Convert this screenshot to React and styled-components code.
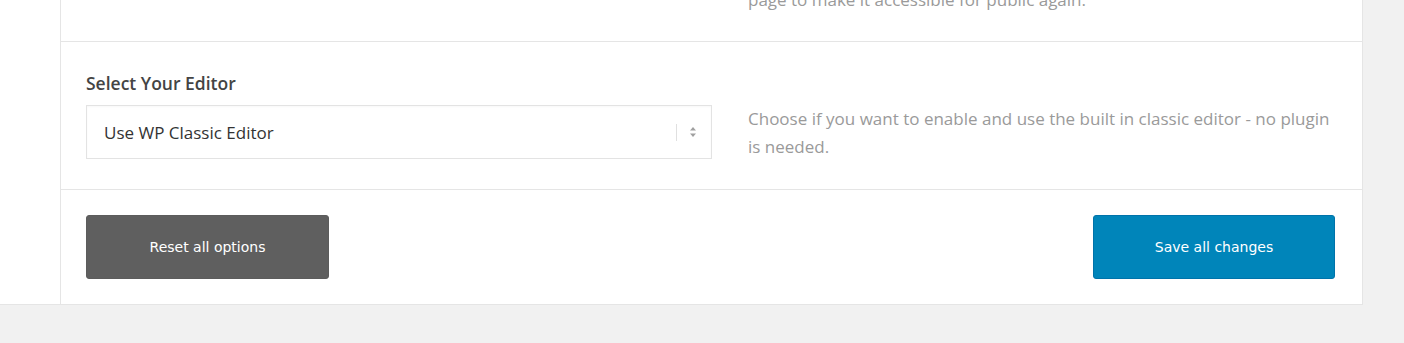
import React from "react";
import styled, { createGlobalStyle } from "styled-components";

const GlobalStyle = createGlobalStyle`
  body {
    margin: 0;
    background: #f1f1f1;
    font-family: "Open Sans", "Noto Sans", sans-serif;
  }
`;

const Panel = styled.div`
  display: flex;
  width: 1362px;
  background: #fff;
  border-right: 1px solid #e5e5e5;
  border-bottom: 1px solid #e5e5e5;
`;

const Side = styled.div`
  width: 60px;
  border-right: 1px solid #e5e5e5;
`;

const Main = styled.div`
  flex: 1;
`;

const Row = styled.div`
  display: grid;
  grid-template-columns: 626px 1fr;
  column-gap: 36px;
  padding: ${(p) => p.$pad || "0 26px 0 25px"};
  border-bottom: 1px solid #e5e5e5;
`;

const TopRow = styled(Row)`
  height: 42px;
  box-sizing: border-box;
  overflow: hidden;
  align-items: start;
`;

const Field = styled.div`
  display: flex;
  flex-direction: column;
`;

const Label = styled.div`
  font-size: 17.5px;
  font-weight: 600;
  line-height: 24px;
  color: #444;
  margin-bottom: 10px;
`;

const Select = styled.div`
  display: flex;
  align-items: center;
  height: 52px;
  border: 1px solid #e3e3e3;
  box-shadow: inset 0 1px 2px rgba(0, 0, 0, 0.03);
  padding: 0 14px 0 17px;
  font-size: 17px;
  color: #333;
`;

const SelectText = styled.span`
  flex: 1;
`;

const Divider = styled.span`
  width: 1px;
  height: 17px;
  background: #e0e0e0;
  margin-right: 12px;
`;

const Desc = styled.p`
  margin: ${(p) => p.$top || "0"};
  font-size: 17px;
  line-height: 28px;
  color: #9a9a9a;
  max-width: 590px;
`;

const Actions = styled.div`
  display: flex;
  justify-content: space-between;
  padding: 25px 27px 25px 25px;
`;

const Button = styled.button`
  width: ${(p) => p.$w}px;
  height: 64px;
  border-radius: 3px;
  border: 1px solid ${(p) => (p.$primary ? "#0073aa" : "#5c5c5c")};
  background: ${(p) => (p.$primary ? "#0085ba" : "#5f5f5f")};
  color: #fff;
  font-family: "DejaVu Sans", Tahoma, sans-serif;
  font-size: 14px;
  cursor: pointer;
`;

const Arrows = () => (
  <svg width="8" height="12" viewBox="0 0 8 12">
    <path d="M4 1 L7 4.5 H1 Z" fill="#a0a0a0" />
    <path d="M4 11 L7 7.5 H1 Z" fill="#a0a0a0" />
  </svg>
);

export default function App() {
  return (
    <>
      <GlobalStyle />
      <Panel>
        <Side />
        <Main>
          <TopRow>
            <div />
            <Desc $top="-14px 0 0">page to make it accessible for public again.</Desc>
          </TopRow>
          <Row $pad="29px 26px 28px 25px">
            <Field>
              <Label>Select Your Editor</Label>
              <Select>
                <SelectText>Use WP Classic Editor</SelectText>
                <Divider />
                <Arrows />
              </Select>
            </Field>
            <Desc $top="34px 0 0">
              Choose if you want to enable and use the built in classic editor - no plugin is needed.
            </Desc>
          </Row>
          <Actions>
            <Button $w={243}>Reset all options</Button>
            <Button $w={242} $primary>Save all changes</Button>
          </Actions>
        </Main>
      </Panel>
    </>
  );
}
